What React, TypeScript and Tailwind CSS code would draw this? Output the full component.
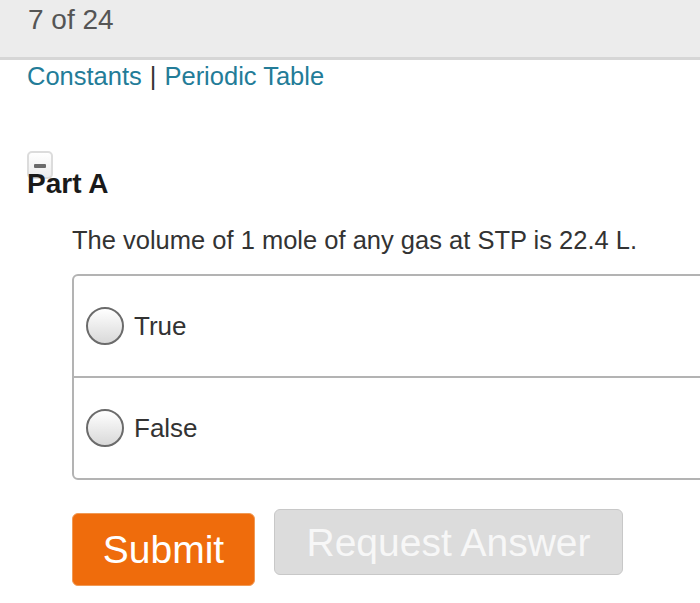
import React from 'react'

function Radio() {
  return (
    <span className="w-[38px] h-[38px] rounded-full border-2 border-[#6b6b6b] bg-gradient-to-b from-white to-[#d9d9d9] flex-shrink-0" />
  )
}

export default function App() {
  return (
    <div className="w-[700px] h-[603px] bg-white overflow-hidden" style={{ fontFamily: '"Liberation Sans", Arial, sans-serif' }}>
      {/* Header */}
      <div className="h-[60px] bg-[#ececec] border-b-[3px] border-[#d6d6d6] px-[28px]">
        <span className="block text-[28px] leading-[40px] text-[#555]">7 of 24</span>
      </div>

      {/* Links */}
      <div className="px-[27px] text-[25.5px] leading-[32px]">
        <span className="text-[#237c98]">Constants</span>
        <span className="text-[#333] mx-[8px]">|</span>
        <span className="text-[#237c98]">Periodic Table</span>
      </div>

      {/* Part A */}
      <div className="relative mt-[58px] px-[27px]">
        <div className="absolute left-[27px] top-[1px] w-[26px] h-[28px] rounded-[5px] border-2 border-[#dcdcdc] bg-gradient-to-b from-white to-[#ececec] flex justify-center">
          <span className="mt-[11px] w-[12px] h-[4px] bg-[#6a6a6a] rounded-[1px]" />
        </div>
        <h2 className="relative pt-[18px] text-[28px] font-bold text-[#1a1a1a] leading-[32px]">Part A</h2>
      </div>

      <div className="pl-[72px]">
        <p className="mt-[24px] text-[25.5px] text-[#333] leading-[32px] whitespace-nowrap">The volume of 1 mole of any gas at STP is 22.4 L.</p>

        <div className="mt-[18px] w-[700px] border-2 border-[#b3b3b3] rounded-[6px]">
          <div className="h-[102px] flex items-center gap-[10px] pl-[12px] border-b-2 border-[#b3b3b3]">
            <Radio />
            <span className="text-[26px] text-[#333]">True</span>
          </div>
          <div className="h-[100px] flex items-center gap-[10px] pl-[12px]">
            <Radio />
            <span className="text-[26px] text-[#333]">False</span>
          </div>
        </div>

        <div className="mt-[29px] flex items-start gap-[19px]">
          <button className="w-[183px] h-[73px] mt-[4px] rounded-[6px] bg-[#ef6c0c] border border-[#f19a55] text-white text-[39px] leading-none">
            Submit
          </button>
          <button className="w-[349px] h-[66px] rounded-[6px] bg-[#dcdcdc] border border-[#c8c8c8] text-[#f7f7f7] text-[39px] leading-none">
            Request Answer
          </button>
        </div>
      </div>
    </div>
  )
}
